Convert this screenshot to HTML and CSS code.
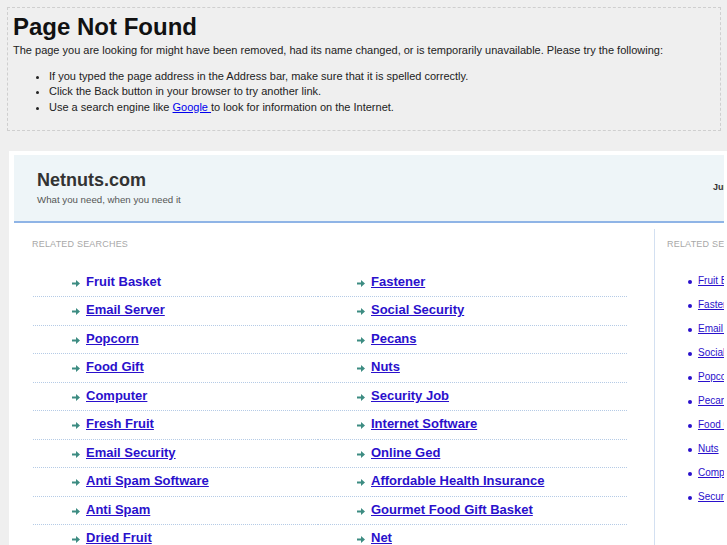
FILE: index.html
```html
<!DOCTYPE html>
<html>
<head>
<meta charset="utf-8">
<title>Netnuts.com</title>
<link rel="stylesheet" href="styles.css">
</head>
<body>
<div class="notfound">
  <h1>Page Not Found</h1>
  <p>The page you are looking for might have been removed, had its name changed, or is temporarily unavailable. Please try the following:</p>
  <ul>
    <li>If you typed the page address in the Address bar, make sure that it is spelled correctly.</li>
    <li>Click the Back button in your browser to try another link.</li>
    <li>Use a search engine like <a href="#">Google </a> to look for information on the Internet.</li>
  </ul>
</div>

<div class="frame">
  <div class="clip">
    <div class="header">
      <div class="brand">
        <div class="site">Netnuts.com</div>
        <div class="tagline">What you need, when you need it</div>
      </div>
      <div class="date">June 29, 2011</div>
    </div>
    <div class="body">
      <div class="main">
        <div class="label">RELATED SEARCHES</div>
        <div class="links">
          <ul class="col">
            <li><a class="plain" href="#">Fruit Basket</a></li>
            <li><a href="#">Email Server</a></li>
            <li><a href="#">Popcorn</a></li>
            <li><a href="#">Food Gift</a></li>
            <li><a href="#">Computer</a></li>
            <li><a href="#">Fresh Fruit</a></li>
            <li><a href="#">Email Security</a></li>
            <li><a href="#">Anti Spam Software</a></li>
            <li><a href="#">Anti Spam</a></li>
            <li><a href="#">Dried Fruit</a></li>
          </ul>
          <ul class="col">
            <li><a href="#">Fastener</a></li>
            <li><a href="#">Social Security</a></li>
            <li><a href="#">Pecans</a></li>
            <li><a href="#">Nuts</a></li>
            <li><a href="#">Security Job</a></li>
            <li><a href="#">Internet Software</a></li>
            <li><a href="#">Online Ged</a></li>
            <li><a href="#">Affordable Health Insurance</a></li>
            <li><a href="#">Gourmet Food Gift Basket</a></li>
            <li><a href="#">Net</a></li>
          </ul>
        </div>
      </div>
      <div class="side">
        <div class="label">RELATED SEARCHES</div>
        <ul class="sidelist">
          <li><a href="#">Fruit Basket</a></li>
          <li><a href="#">Fastener</a></li>
          <li><a href="#">Email Server</a></li>
          <li><a href="#">Social Security</a></li>
          <li><a href="#">Popcorn</a></li>
          <li><a href="#">Pecans</a></li>
          <li><a href="#">Food Gift</a></li>
          <li><a href="#">Nuts</a></li>
          <li><a href="#">Computer</a></li>
          <li><a href="#">Security Job</a></li>
        </ul>
      </div>
    </div>
  </div>
</div>
</body>
</html>
```
FILE: styles.css
```css
html {
  overflow: hidden;
}
body {
  margin: 0;
  background: #efefef;
  font-family: "Liberation Sans", Arial, sans-serif;
  color: #222;
  width: 1000px;
}
.notfound {
  margin: 7px 0 0 7px;
  width: 702px;
  border: 1px dashed #cfcfcf;
  padding: 5px 5px 15px 5px;
  font-size: 11px;
}
.notfound h1 {
  margin: 0;
  font-size: 24px;
  line-height: 28px;
  font-weight: bold;
  color: #111;
}
.notfound p {
  margin: 2px 0 0 0;
  line-height: 14px;
}
.notfound ul {
  margin: 12px 0 0 0;
  padding-left: 36px;
}
.notfound li {
  line-height: 15.3px;
}
.notfound a {
  color: #0000ee;
}

.frame {
  margin: 20px 0 0 9px;
  background: #fff;
  padding: 4px 5px 0 5px;
  width: 710px;
  height: 520px;
}
.clip {
  width: 710px;
  height: 520px;
  overflow: hidden;
}
.header {
  background: #eef5f8;
  border-bottom: 2px solid #8fb4e6;
  height: 66px;
  display: flex;
  align-items: flex-start;
  padding-left: 23px;
}
.brand {
  width: 676px;
  flex: none;
  padding-top: 13px;
}
.site {
  font-size: 18px;
  font-weight: bold;
  color: #333;
  line-height: 24px;
}
.tagline {
  font-size: 9.7px;
  color: #555;
  line-height: 12px;
  margin-top: 2px;
}
.date {
  font-size: 9px;
  font-weight: bold;
  color: #333;
  padding-top: 27px;
  white-space: nowrap;
}
.body {
  display: flex;
  margin-top: 6px;
}
.main {
  width: 622px;
  flex: none;
  padding: 10px 0 0 18px;
}
.label {
  font-size: 9px;
  line-height: 11px;
  letter-spacing: 0.2px;
  color: #a8a8a8;
  white-space: nowrap;
}
.links {
  display: grid;
  grid-template-columns: 285px 309px;
  margin-top: 19px;
  margin-left: 1px;
}
.col {
  list-style: none;
  margin: 0;
  padding: 0;
}
.col li {
  border-bottom: 1px dotted #b5cbe6;
  padding: 6px 0 7px 53px;
  line-height: 14.5px;
  font-size: 13px;
  font-weight: bold;
  position: relative;
}
.col li::before {
  content: "";
  position: absolute;
  left: 39px;
  top: 11px;
  width: 8px;
  height: 7px;
  background: url("data:image/svg+xml;utf8,<svg xmlns='http://www.w3.org/2000/svg' width='8' height='7' viewBox='0 0 8 7'><path d='M0 2.5h4V0l4 3.5L4 7V4.5H0z' fill='%233d8c82'/></svg>") no-repeat;
}
.col a {
  color: #2a10cc;
}
.col a.plain {
  text-decoration: none;
}
.side {
  border-left: 1px solid #d3e0f1;
  padding: 10px 0 0 12px;
  height: 320px;
  width: 220px;
  flex: none;
}
.sidelist {
  list-style: none;
  margin: 24px 0 0 0;
  padding: 0 0 0 31px;
}
.sidelist li {
  font-size: 10px;
  line-height: 14px;
  margin-bottom: 10px;
  position: relative;
  white-space: nowrap;
}
.sidelist li::before {
  content: "";
  position: absolute;
  left: -10px;
  top: 6px;
  width: 4px;
  height: 4px;
  border-radius: 50%;
  background: #2a10cc;
}
.sidelist a {
  color: #2a10cc;
}
```
